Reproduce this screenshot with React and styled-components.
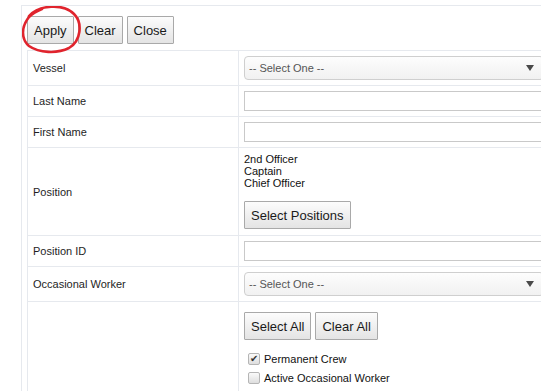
import styled, { createGlobalStyle } from 'styled-components';

const GlobalStyle = createGlobalStyle`
    html, body {
        margin: 0;
        padding: 0;
        background: #fff;
        overflow: hidden;
    }
    body {
        font-family: "Liberation Sans", Arial, sans-serif;
        color: #1e1e1e;
    }
`;

const Page = styled.div`
    width: 547px;
    height: 391px;
    padding: 5px 0 0 21px;
    box-sizing: border-box;
`;

const Frame = styled.div`
    position: relative;
    width: 520px;
    height: 386px;
    box-sizing: border-box;
    border-left: 1px solid #e6e9ee;
    border-top: 1px solid #e6e9ee;
    padding: 10px 0 0 5px;
    overflow: hidden;
`;

const Toolbar = styled.div`
    display: flex;
    gap: 4px;
`;

const Button = styled.button`
    height: 28px;
    padding: 0 6px;
    border: 1px solid #a9a9a9;
    border-radius: 1px;
    background: linear-gradient(#fcfcfc, #e4e4e4);
    font-family: "Liberation Sans", Arial, sans-serif;
    font-size: 13px;
    color: #1a1a1a;
    cursor: pointer;
`;

const Annotation = styled.svg`
    position: absolute;
    left: -21px;
    top: -5px;
    width: 100px;
    height: 60px;
    pointer-events: none;
`;

const Form = styled.div`
    margin-top: 6px;
    display: grid;
    grid-template-columns: 211px 340px;
    border-top: 1px solid #e6e9ee;
    border-left: 1px solid #e6e9ee;
`;

const Cell = styled.div`
    border-right: 1px solid #e6e9ee;
    border-bottom: 1px solid #e6e9ee;
    padding: 5px 5px ${({ $pb }) => ($pb ? `${$pb}px` : '5px')};
    display: flex;
    flex-direction: column;
    justify-content: ${({ $top }) => ($top ? 'flex-start' : 'center')};
    align-items: flex-start;
    font-size: 11px;
`;

const Label = styled(Cell)`
    color: #1e1e1e;
`;

const Select = styled.div`
    width: 300px;
    height: 24px;
    box-sizing: border-box;
    border: 1px solid #cfcfcf;
    border-radius: 4px;
    background: linear-gradient(#fdfdfd, #f1f1f1);
    display: flex;
    align-items: center;
    justify-content: space-between;
    padding: 0 9px 0 4px;
    font-size: 11px;
    color: #555;
`;

const Arrow = styled.span`
    width: 0;
    height: 0;
    border-left: 4px solid transparent;
    border-right: 4px solid transparent;
    border-top: 6px solid #4a4a4a;
`;

const Input = styled.input`
    width: 300px;
    height: 20px;
    box-sizing: border-box;
    border: 1px solid #c9c9c9;
    margin: 0;
    padding: 0 3px;
    font-size: 11px;
`;

const PositionList = styled.div`
    line-height: 12px;
    font-size: 11px;
    color: #111;
    margin-bottom: 12px;
`;

const ButtonRow = styled.div`
    display: flex;
    gap: 4px;
    margin: 5px 0 9px;
`;

const CheckRow = styled.label`
    display: flex;
    align-items: center;
    height: 19px;
    gap: 4px;
    padding-left: 4px;
    font-size: 11px;
    color: #111;
`;

const Box = styled.span`
    width: 12px;
    height: 12px;
    box-sizing: border-box;
    border: 1px solid #b5b5b5;
    border-radius: 2px;
    background: linear-gradient(#fafafa, #dedede);
    display: flex;
    align-items: center;
    justify-content: center;
    font-size: 10px;
    line-height: 1;
    color: #333;
`;

const options = [
    { id: 1, text: 'Permanent Crew', checked: true },
    { id: 2, text: 'Active Occasional Worker', checked: false },
    { id: 3, text: 'Inactive Occasional Worker', checked: false },
];

export default function App() {
    return (
        <Page>
            <GlobalStyle />
            <Frame>
                <Toolbar>
                    <Button>Apply</Button>
                    <Button>Clear</Button>
                    <Button>Close</Button>
                </Toolbar>
                <Annotation viewBox="0 0 100 60">
                    <path
                        d="M28 15 C38 4, 62 2, 73 13 C82 22, 80 40, 68 47 C56 53, 38 52, 28 45 C20 38, 20 26, 28 16 C32 12, 36 10, 41 8"
                        fill="none"
                        stroke="#e0242d"
                        strokeWidth="2.6"
                        strokeLinecap="round"
                    />
                </Annotation>

                <Form>
                    <Label>Vessel</Label>
                    <Cell>
                        <Select>-- Select One --<Arrow /></Select>
                    </Cell>

                    <Label>Last Name</Label>
                    <Cell><Input /></Cell>

                    <Label>First Name</Label>
                    <Cell><Input /></Cell>

                    <Label>Position</Label>
                    <Cell $top $pb={6}>
                        <PositionList>
                            <div>2nd Officer</div>
                            <div>Captain</div>
                            <div>Chief Officer</div>
                        </PositionList>
                        <Button>Select Positions</Button>
                    </Cell>

                    <Label>Position ID</Label>
                    <Cell><Input /></Cell>

                    <Label>Occasional Worker</Label>
                    <Cell>
                        <Select>-- Select One --<Arrow /></Select>
                    </Cell>

                    <Label />
                    <Cell $top>
                        <ButtonRow>
                            <Button>Select All</Button>
                            <Button>Clear All</Button>
                        </ButtonRow>
                        {options.map(o => (
                            <CheckRow key={o.id}>
                                <Box>{o.checked ? '✔' : ''}</Box>
                                {o.text}
                            </CheckRow>
                        ))}
                    </Cell>
                </Form>
            </Frame>
        </Page>
    );
}
